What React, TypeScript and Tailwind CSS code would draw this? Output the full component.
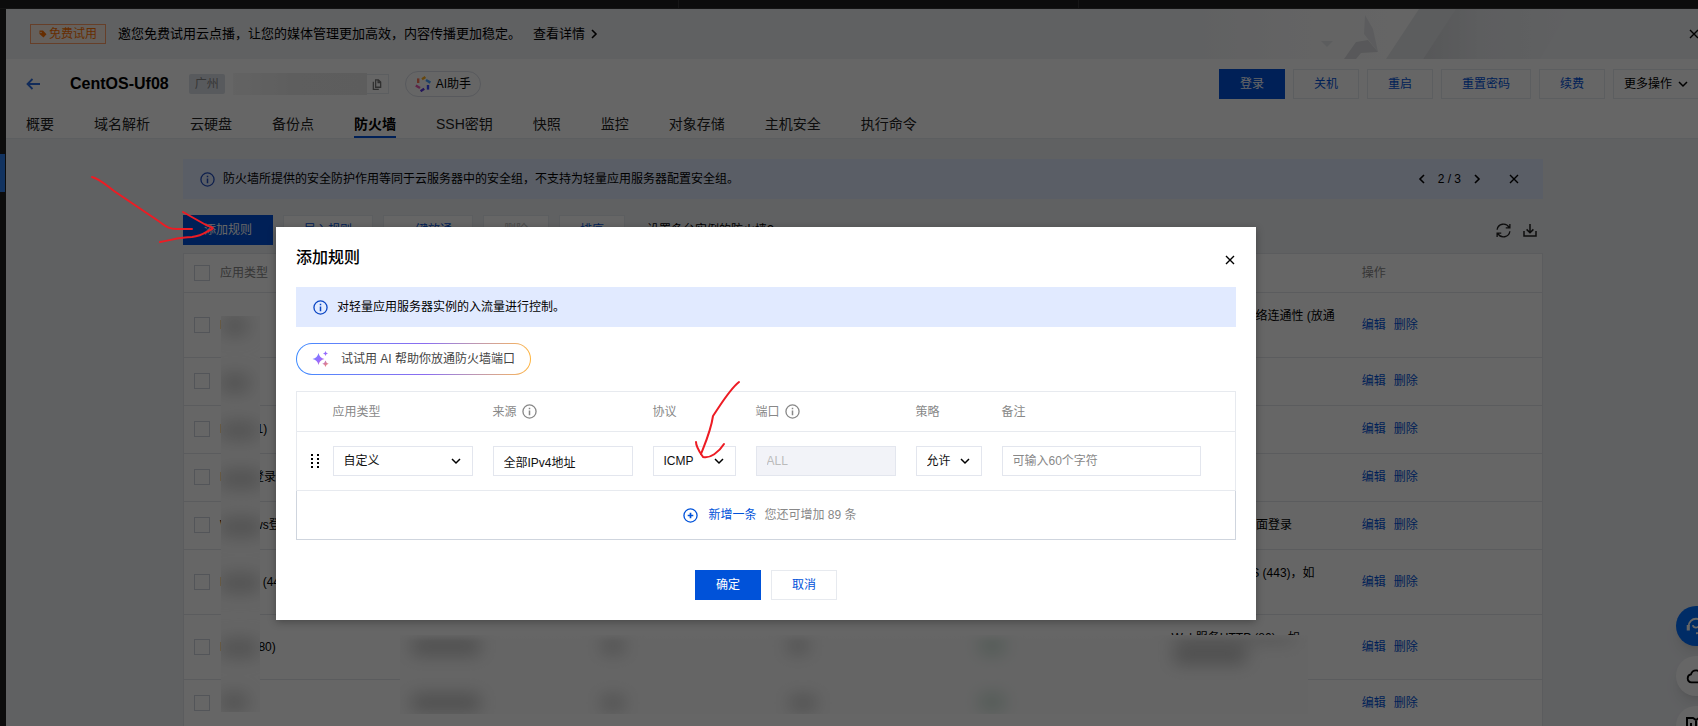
import { useState } from 'react';
import type { ReactNode } from 'react';

const tabs = [
  '概要',
  '域名解析',
  '云硬盘',
  '备份点',
  '防火墙',
  'SSH密钥',
  '快照',
  '监控',
  '对象存储',
  '主机安全',
  '执行命令',
];

interface Rule {
  app: string;
  protocol: string;
  port: string;
  note: string;
  tall?: boolean;
}

const rules: Rule[] = [
  { app: 'Ping', protocol: 'ICMP', port: 'ALL', note: '通过Ping测试网络连通性 (放通全部ICMP)', tall: true },
  { app: '自定义', protocol: 'TCP', port: 'ALL', note: '' },
  { app: 'FTP (21)', protocol: 'TCP', port: '21', note: '' },
  { app: 'Linux 登录', protocol: 'TCP', port: '22', note: '' },
  { app: 'Windows登录', protocol: 'TCP', port: '3389', note: 'Windows远程桌面登录' },
  { app: 'HTTPS (443)', protocol: 'TCP', port: '443', note: 'Web服务HTTPS (443)，如 Apache、Nginx', tall: true },
  { app: 'HTTP (80)', protocol: 'TCP', port: '80', note: 'Web服务HTTP (80)，如 Apache、Nginx', tall: true },
  { app: '自定义', protocol: 'TCP', port: '8888', note: '' },
];

const InfoIcon = ({ className }: { className: string }) => (
  <svg viewBox="0 0 16 16" fill="none" stroke="currentColor" className={className} aria-hidden="true">
    <circle cx="8" cy="8" r="7" strokeWidth="1.4" />
    <path d="M8 7v5M8 4v1.6" strokeWidth="1.6" />
  </svg>
);

const ChevronDown = ({ className = '' }: { className?: string }) => (
  <svg viewBox="0 0 10 10" fill="none" stroke="currentColor" strokeWidth="1.5" className={`h-[10px] w-[10px] ${className}`} aria-hidden="true">
    <path d="M1 3l4 4 4-4" />
  </svg>
);

const ChevronSide = ({ flip = false }: { flip?: boolean }) => (
  <svg viewBox="0 0 10 10" fill="none" stroke="currentColor" strokeWidth="1.6" className={`h-[10px] w-[10px] ${flip ? 'rotate-180' : ''}`} aria-hidden="true">
    <path d="M3 1l4 4-4 4" />
  </svg>
);

const CloseIcon = () => (
  <svg viewBox="0 0 10 10" fill="none" stroke="currentColor" strokeWidth="1.4" className="h-[10px] w-[10px]" aria-hidden="true">
    <path d="M1 1l8 8M9 1l-8 8" />
  </svg>
);

const OutlineButton = ({ children, className = '' }: { children: ReactNode; className?: string }) => (
  <button type="button" className={`h-[30px] border border-[#e7eaef] bg-white text-xs whitespace-nowrap ${className}`}>
    {children}
  </button>
);

const TrialBanner = () => (
  <div className="relative flex h-[50px] items-center bg-[#f0f2f5] pr-4 pl-6">
    <svg viewBox="0 0 380 50" preserveAspectRatio="none" className="absolute right-[150px] h-[50px] w-[380px]" aria-hidden="true">
      <defs>
        <linearGradient id="sheen" x1="0" x2="1">
          <stop offset="0" stopColor="#f0f2f5" />
          <stop offset="0.3" stopColor="#f8f8f9" />
          <stop offset="0.7" stopColor="#fdfdfd" />
          <stop offset="1" stopColor="#f0f2f5" />
        </linearGradient>
        <linearGradient id="fold" x1="0" x2="1">
          <stop offset="0" stopColor="#d8dadd" />
          <stop offset="0.4" stopColor="#e9ebee" />
          <stop offset="1" stopColor="#f0f2f5" />
        </linearGradient>
      </defs>
      <path d="M0 0h320v50H0z" fill="url(#sheen)" />
      <path d="M229 0h38l-34 50h-37z" fill="#e6e8eb" />
      <path d="M266 0h114l-30 50H233z" fill="url(#fold)" />
      <path d="M175 6l8 14 5 23-14-18z" fill="#e5e7ea" />
      <path d="M166 33l12-2 10 12-17 1-5 6h-12z" fill="#dbdde0" />
      <path d="M131 32h12l-6 6z" fill="#e7e9ec" />
    </svg>
    <div className="relative flex h-5 items-center gap-[2px] border border-[#ff9d66] bg-[#fdf0e6] px-2 text-xs text-[#ff7200]">
      <svg viewBox="0 0 16 16" className="h-2 w-2" aria-hidden="true">
        <path fillRule="evenodd" d="M1 1h7l7 7.5L9 15 1 8zM4 3.4a1.5 1.5 0 100 3 1.5 1.5 0 000-3z" fill="currentColor" />
      </svg>
      免费试用
    </div>
    <p className="relative ml-3 text-[13px]">邀您免费试用云点播，让您的媒体管理更加高效，内容传播更加稳定。</p>
    <a href="#trial" className="relative ml-3 flex items-center gap-1 text-[13px]">
      查看详情
      <ChevronSide />
    </a>
    <button type="button" aria-label="关闭横幅" className="relative ml-auto flex h-5 w-5 items-center justify-center">
      <CloseIcon />
    </button>
  </div>
);

const AssistantLogo = () => (
  <svg viewBox="0 0 16 16" fill="none" strokeWidth="2.4" className="h-4 w-4" aria-hidden="true">
    <path d="M7 3.2L10.4 1" stroke="#ffb020" />
    <path d="M11 4l4.400 2.600" stroke="#4da3ff" />
    <path d="M13 9v4.600" stroke="#3b4cff" />
    <path d="M9.200 12.800L5.600 15.200" stroke="#5b35e0" />
    <path d="M5 12L.8 9.400" stroke="#e858b0" />
    <path d="M3.200 7V2.400" stroke="#ff7a59" />
  </svg>
);

const InstanceHeader = () => (
  <header className="border-b border-[#e7eaef] bg-white">
    <div className="flex h-[50px] items-center pr-5 pl-5">
      <a href="#back" aria-label="返回" className="text-[#2b6de0]">
        <svg viewBox="0 0 14 12" fill="none" stroke="currentColor" strokeWidth="1.8" className="h-3 w-[14px]">
          <path d="M14 6H1.5M6.5 1l-5 5 5 5" />
        </svg>
      </a>
      <h1 className="ml-[30px] text-base font-bold">CentOS-Uf08</h1>
      <span className="ml-5 h-5 w-9 rounded-xs bg-[#dde1e8] text-center text-xs leading-5 text-[#888]">广州</span>
      <div className="ml-2 flex items-center">
        <div className="h-[22px] w-[134px] bg-linear-to-r from-[#f7f7f7] via-[#eaeaea] to-[#e9e9e9]" />
        <button type="button" aria-label="复制" className="flex h-5 w-[22px] items-center justify-center border border-l-0 border-[#e7eaef] text-[#777]">
          <svg viewBox="0 0 10 12" fill="none" stroke="currentColor" strokeWidth="1.4" className="h-[11px] w-[10px]">
            <path d="M3.5 1h3l2.500 2.400V9H3.500zM6.200 1v2.800H9M1 3v8.200h6" />
          </svg>
        </button>
      </div>
      <button type="button" className="ml-4 flex h-[26px] items-center gap-[5px] rounded-full border border-[#dcdfe8] px-[9px] text-xs">
        <AssistantLogo />
        AI助手
      </button>
      <div className="ml-auto flex gap-2">
        <button type="button" className="h-[30px] w-[66px] bg-[#0052d9] text-xs text-white">登录</button>
        <OutlineButton className="w-[66px] text-[#0052d9]">关机</OutlineButton>
        <OutlineButton className="w-[66px] text-[#0052d9]">重启</OutlineButton>
        <OutlineButton className="w-[90px] text-[#0052d9]">重置密码</OutlineButton>
        <OutlineButton className="w-[66px] text-[#0052d9]">续费</OutlineButton>
        <OutlineButton className="flex w-[87px] items-center gap-[6px] pl-[10px]">
          更多操作
          <ChevronDown />
        </OutlineButton>
      </div>
    </div>
    <nav className="flex h-[29px] gap-10 pl-5 text-sm leading-[30px]">
      {tabs.map((tab) => (
        <a
          key={tab}
          href="#tab"
          className={tab === '防火墙' ? 'border-b-2 border-[#0052d9] font-bold whitespace-nowrap' : 'whitespace-nowrap text-[#222]'}
        >
          {tab}
        </a>
      ))}
    </nav>
  </header>
);

const Notice = () => (
  <div className="flex h-10 items-center bg-[#e1eaff] pr-6 pl-[17px] text-xs">
    <InfoIcon className="h-[15px] w-[15px] text-[#2450c0]" />
    <p className="ml-2">防火墙所提供的安全防护作用等同于云服务器中的安全组，不支持为轻量应用服务器配置安全组。</p>
    <div className="ml-auto flex items-center gap-[11px]">
      <button type="button" aria-label="上一条"><ChevronSide flip /></button>
      <span>2 / 3</span>
      <button type="button" aria-label="下一条"><ChevronSide /></button>
    </div>
    <button type="button" aria-label="关闭提示" className="ml-[27px]"><CloseIcon /></button>
  </div>
);

const Toolbar = () => (
  <div className="mt-4 flex items-center gap-[10px] text-xs">
    <button type="button" className="h-[30px] w-[90px] bg-[#0052d9] text-white">添加规则</button>
    <OutlineButton className="w-[90px] text-[#0052d9]">导入规则</OutlineButton>
    <OutlineButton className="w-[90px] text-[#0052d9]">一键放通</OutlineButton>
    <OutlineButton className="w-[66px] text-[#bbb]">删除</OutlineButton>
    <OutlineButton className="w-[66px] text-[#0052d9]">排序</OutlineButton>
    <a href="#multi" className="ml-3">设置多台实例的防火墙?</a>
    <div className="ml-auto flex items-center gap-3 pr-[6px] text-[#222]">
      <button type="button" aria-label="刷新">
        <svg viewBox="0 0 16 16" fill="none" stroke="currentColor" strokeWidth="1.4" className="h-[15px] w-[15px]">
          <path d="M1.2 7.2A6.900 6.900 0 0114 4.600M14.800 8.800A6.900 6.900 0 012 11.400M14.800 1v4.200h-4.400M1.200 15v-4.200h4.400" />
        </svg>
      </button>
      <button type="button" aria-label="下载">
        <svg viewBox="0 0 14 13" fill="none" stroke="currentColor" strokeWidth="1.5" className="h-[13px] w-[14px]">
          <path d="M1 7v5h12V7M7 0v8.500M3.600 5.400L7 8.800l3.400-3.400" />
        </svg>
      </button>
    </div>
  </div>
);

// Smudges that cover the private cells of the table
const NamePatch = () => (
  <svg viewBox="0 0 39 396" className="absolute top-[62px] left-[37px] h-[396px] w-[39px]" aria-hidden="true">
    <defs>
      <filter id="smudge-a" x="-100%" y="-20%" width="300%" height="140%">
        <feGaussianBlur stdDeviation="9" />
      </filter>
    </defs>
    <path d="M0 0h39v396H0z" fill="#fcfcfc" />
    <g fill="#c4c4c4" filter="url(#smudge-a)">
      <rect x="2" y="2" width="24" height="16" />
      <rect x="0" y="59" width="28" height="16" />
      <rect x="0" y="107" width="36" height="15" />
      <rect x="0" y="155" width="40" height="16" />
      <rect x="0" y="203" width="40" height="16" />
      <rect x="0" y="259" width="38" height="16" />
      <rect x="0" y="324" width="36" height="16" />
      <rect x="0" y="378" width="26" height="16" />
    </g>
  </svg>
);

const RowPatch = () => (
  <svg
    viewBox="0 0 908 79"
    preserveAspectRatio="none"
    className="absolute top-[381px] left-[216px] h-[79px] w-[908px]"
    aria-hidden="true"
  >
    <defs>
      <filter id="smudge-b" x="-10%" y="-60%" width="120%" height="220%">
        <feGaussianBlur stdDeviation="9" />
      </filter>
      <linearGradient id="patch-edge" x1="0" y1="0" x2="0" y2="1">
        <stop offset="0" stopColor="#fff" stopOpacity="0.6" />
        <stop offset="1" stopColor="#fff" stopOpacity="0" />
      </linearGradient>
    </defs>
    <path d="M0 0h908v79H0z" fill="#fdfdfd" />
    <g fill="#bababa" filter="url(#smudge-b)">
      <rect x="12" y="4" width="68" height="15" />
      <rect x="202" y="5" width="22" height="12" />
      <rect x="388" y="5" width="20" height="12" />
      <rect x="580" y="4" width="24" height="14" fill="#c0dacc" />
      <rect x="774" y="0" width="120" height="6" />
      <rect x="774" y="12" width="72" height="16" />
      <rect x="12" y="60" width="68" height="15" />
      <rect x="202" y="62" width="22" height="12" />
      <rect x="390" y="62" width="26" height="12" />
      <rect x="580" y="60" width="24" height="14" fill="#c0dacc" />
    </g>
    <path d="M0 0h908v6H0z" fill="url(#patch-edge)" />
  </svg>
);

const RuleTable = () => (
  <div className="relative mt-2 border border-[#e3e5ea] bg-white">
    <table className="w-full table-fixed border-collapse text-left text-xs leading-[18px]">
      <colgroup>
        <col className="w-[26px]" />
        <col span={7} />
      </colgroup>
      <thead>
        <tr className="h-[38px] border-b border-[#e3e5ea] text-[#888]">
          <th className="pl-[10px]">
            <input type="checkbox" aria-label="全选" className="block h-4 w-4 appearance-none border border-[#cfd5de]" />
          </th>
          <th className="px-[10px] font-normal">应用类型</th>
          <th className="px-[10px] font-normal">来源</th>
          <th className="px-[10px] font-normal">协议</th>
          <th className="px-[10px] font-normal">端口</th>
          <th className="px-[10px] font-normal">策略</th>
          <th className="px-[10px] font-normal">备注</th>
          <th className="px-[10px] font-normal">操作</th>
        </tr>
      </thead>
      <tbody>
        {rules.map((rule, i) => (
          <tr key={i} className={`border-b border-[#e3e5ea] ${rule.tall ? 'h-[65px]' : 'h-12'}`}>
            <td className="pl-[10px]">
              <input type="checkbox" aria-label={rule.app} className="block h-4 w-4 appearance-none border border-[#cfd5de]" />
            </td>
            <td className="px-[10px]">{rule.app}</td>
            <td className="px-[10px]">全部IPv4地址</td>
            <td className="px-[10px]">{rule.protocol}</td>
            <td className="px-[10px]">{rule.port}</td>
            <td className="px-[10px] text-[#0abf5b]">允许</td>
            <td className="px-[10px]">{rule.note}</td>
            <td className="px-[10px] text-[#0052d9]">
              <a href="#edit">编辑</a>
              <a href="#delete" className="ml-2">删除</a>
            </td>
          </tr>
        ))}
      </tbody>
    </table>
    <NamePatch />
    <RowPatch />
  </div>
);

const FloatingTools = () => (
  <div className="absolute top-[606px] right-1 flex flex-col gap-[10px]">
    <button type="button" aria-label="在线客服" className="flex h-10 w-10 items-center justify-center rounded-full bg-[#006eff] text-white shadow-lg">
      <svg viewBox="0 0 22 22" fill="none" stroke="currentColor" strokeWidth="2" className="h-5 w-5">
        <path d="M3 11a8 8 0 0116 0M7.500 10a3.600 3.600 0 007 0M19 14c0 4-3 5-8 5" />
        <path d="M2.500 10v6M19.500 10v6" strokeWidth="3.400" />
      </svg>
    </button>
    <button type="button" aria-label="云助手" className="flex h-10 w-10 items-center justify-center rounded-full bg-white shadow-lg">
      <svg viewBox="0 0 22 18" fill="none" stroke="currentColor" strokeWidth="2" className="h-[18px] w-5">
        <path d="M6 16a4.400 4.400 0 01-.6-8.700A6 6 0 0117 7.400 4.400 4.400 0 0116.500 16z" />
      </svg>
    </button>
    <button type="button" aria-label="文档" className="flex h-10 w-10 items-center justify-center rounded-full bg-white shadow-lg">
      <svg viewBox="0 0 20 18" fill="none" stroke="currentColor" strokeWidth="2" className="h-[18px] w-5">
        <path d="M1 1h6l3 2 3-2h6v15h-6l-3 1-3-1H1zM10 3v14M5 6v4" />
      </svg>
    </button>
  </div>
);

const Field = ({ children }: { children: ReactNode }) => (
  <div className="relative">
    {children}
    <ChevronDown className="pointer-events-none absolute top-[10px] right-3" />
  </div>
);

const controlClass = 'block h-[30px] w-full appearance-none border border-[#e3e6ee] bg-white px-[10px] text-xs text-[#111]';

const RuleEditor = () => {
  const [note, setNote] = useState('');

  return (
    <div className="mt-4">
      <table className="w-full table-fixed border-collapse text-left text-xs">
        <colgroup>
          <col className="w-[26px]" />
          <col className="w-[160px]" />
          <col className="w-[160px]" />
          <col className="w-[103px]" />
          <col className="w-[160px]" />
          <col className="w-[86px]" />
          <col />
        </colgroup>
        <thead>
          <tr className="h-10 border border-[#e7eaef] text-[#888]">
            <td />
            <th className="px-[10px] font-normal">应用类型</th>
            <th className="px-[10px] font-normal">
              <span className="flex items-center gap-[5px]">来源<InfoIcon className="h-[15px] w-[15px]" /></span>
            </th>
            <th className="px-[10px] font-normal">协议</th>
            <th className="px-[10px] font-normal">
              <span className="flex items-center gap-[5px]">端口<InfoIcon className="h-[15px] w-[15px]" /></span>
            </th>
            <th className="px-[10px] font-normal">策略</th>
            <th className="px-[10px] font-normal">备注</th>
          </tr>
        </thead>
        <tbody>
          <tr className="h-[59px] border border-[#e7eaef]">
            <td className="pl-[14px]">
              <svg viewBox="0 0 9 14" className="h-[14px] w-[9px]" aria-hidden="true">
                <path d="M0 0h2v2H0zM6 0h2v2H6zM0 4h2v2H0zM6 4h2v2H6zM0 8h2v2H0zM6 8h2v2H6zM0 12h2v2H0zM6 12h2v2H6z" />
              </svg>
            </td>
            <td className="px-[10px]">
              <Field>
                <select aria-label="应用类型" className={controlClass}>
                  <option>自定义</option>
                </select>
              </Field>
            </td>
            <td className="px-[10px]">
              <input aria-label="来源" defaultValue="全部IPv4地址" className={controlClass} />
            </td>
            <td className="px-[10px]">
              <Field>
                <select aria-label="协议" className={controlClass}>
                  <option>ICMP</option>
                </select>
              </Field>
            </td>
            <td className="px-[10px]">
              <input
                aria-label="端口"
                defaultValue="ALL"
                disabled
                className="block h-[30px] w-full border border-[#e3e6ee] bg-[#f2f3f8] px-[10px] text-xs text-[#bbb]"
              />
            </td>
            <td className="px-[10px]">
              <Field>
                <select aria-label="策略" className={controlClass}>
                  <option>允许</option>
                </select>
              </Field>
            </td>
            <td className="pr-[34px] pl-[10px]">
              <input
                aria-label="备注"
                value={note}
                onChange={(e) => setNote(e.target.value)}
                placeholder="可输入60个字符"
                className={`${controlClass} placeholder:text-[#888]`}
              />
            </td>
          </tr>
        </tbody>
      </table>
      <div className="flex h-[49px] items-center justify-center border border-t-0 border-[#cfd5de] pl-2 text-xs">
        <button type="button" className="flex items-center gap-[10px] text-[#0052d9]">
          <svg viewBox="0 0 16 16" fill="none" stroke="currentColor" strokeWidth="1.4" className="h-[15px] w-[15px]" aria-hidden="true">
            <circle cx="8" cy="8" r="7" />
            <path d="M8 5v6M5 8h6" strokeWidth="1.8" />
          </svg>
          新增一条
        </button>
        <span className="ml-2 text-[#888]">您还可增加 89 条</span>
      </div>
    </div>
  );
};

const AddRuleDialog = () => (
  <div
    role="dialog"
    aria-labelledby="dialog-title"
    className="w-[980px] bg-white px-5 pt-[19px] pb-5 shadow-[0_2px_8px_rgba(0,0,0,0.3)]"
  >
    <div className="flex items-center justify-between pr-[1px]">
      <h2 id="dialog-title" className="text-base font-medium">添加规则</h2>
      <button type="button" aria-label="关闭" className="mt-1"><CloseIcon /></button>
    </div>
    <div className="mt-[17px] flex h-10 items-center bg-[#e1eaff] pl-[17px] text-xs">
      <InfoIcon className="h-[15px] w-[15px] text-[#0c47c4]" />
      <p className="ml-[9px]">对轻量应用服务器实例的入流量进行控制。</p>
    </div>
    <button type="button" className="mt-4 block h-8 rounded-full bg-linear-to-r from-[#3d8bff] via-[#8b6cf0] via-55% to-[#ffb53d] p-px">
      <span className="flex h-full items-center gap-3 rounded-full bg-white px-[15px] text-xs text-[#444]">
        <svg viewBox="0 0 17 16" className="h-4 w-[17px]" aria-hidden="true">
          <defs>
            <linearGradient id="spark" x1="0" y1="0" x2="1" y2="1">
              <stop offset="0" stopColor="#5b8cff" />
              <stop offset="0.5" stopColor="#9a6bff" />
              <stop offset="1" stopColor="#ff8a5c" />
            </linearGradient>
          </defs>
          <path
            d="M6.500 2q1 5 6 6-5 1-6 6-1-5-6-6 5-1 6-6zM13.500 0q.4 2.100 2.500 2.500-2.100.4-2.500 2.500-.4-2.100-2.500-2.500 2.100-.4 2.500-2.500zM13.500 9.500q.6 2.600 3.200 3.200-2.600.6-3.200 3.200-.6-2.600-3.200-3.200 2.600-.6 3.200-3.200z"
            fill="url(#spark)"
          />
        </svg>
        试试用 AI 帮助你放通防火墙端口
      </span>
    </button>
    <RuleEditor />
    <div className="mt-[30px] flex justify-center gap-[10px] text-xs">
      <button type="button" className="h-[30px] w-[66px] bg-[#0052d9] text-white">确定</button>
      <OutlineButton className="w-[66px] text-[#0052d9]">取消</OutlineButton>
    </div>
  </div>
);

// Hand-drawn arrows pointing at the steps to follow
const Annotations = () => (
  <svg
    viewBox="0 0 760 480"
    fill="none"
    stroke="#ed1c24"
    strokeWidth="2"
    strokeLinecap="round"
    strokeLinejoin="round"
    className="pointer-events-none absolute top-0 left-0 h-[480px] w-[760px]"
    aria-hidden="true"
  >
    <path d="M92 177c8 2 14 8 22 14l43 29c9 6 10 9 20 9h15" />
    <path d="M183 212l23 13q9 3 6 4c-5 2-9 7-20 8-12 0-20 3-32 5" />
    <path d="M739 382c-9 7-18 22-26 34-2 14-6 23-12 38" />
    <path d="M696 442c0 5 3 9 7 15 7 2 16-5 21-13" />
  </svg>
);

export default function App() {
  return (
    <div
      className="relative h-screen overflow-hidden bg-[#202020] text-black"
      style={{ fontFamily: '"Liberation Sans", "Noto Sans CJK SC", sans-serif' }}
    >
      <div className="flex h-[9px] border-b border-[#333]">
        <div className="w-2/5 border-r border-[#383838]" />
        <div className="w-[400px] border-r border-[#383838]" />
      </div>
      <div className="flex h-full">
        <div className="w-[6px] shrink-0 pt-[145px] pr-px">
          <div className="h-[38px] bg-[#2d80f0]" />
        </div>
        {/* the page is a little wider than the window and runs off its right side */}
        <div className="w-[calc(100%+16px)] shrink-0 bg-[#f0f2f5]">
          <TrialBanner />
          <InstanceHeader />
          <main className="mx-auto max-w-[1360px] pt-5">
            <Notice />
            <Toolbar />
            <RuleTable />
          </main>
        </div>
      </div>
      <div className="absolute inset-y-0 right-[-22px] w-12">
        <FloatingTools />
      </div>
      <div className="absolute inset-0 bg-black/60" />
      <div className="absolute inset-0 flex items-start justify-center pt-[227px] pr-[166px]">
        <AddRuleDialog />
      </div>
      <Annotations />
    </div>
  );
}
